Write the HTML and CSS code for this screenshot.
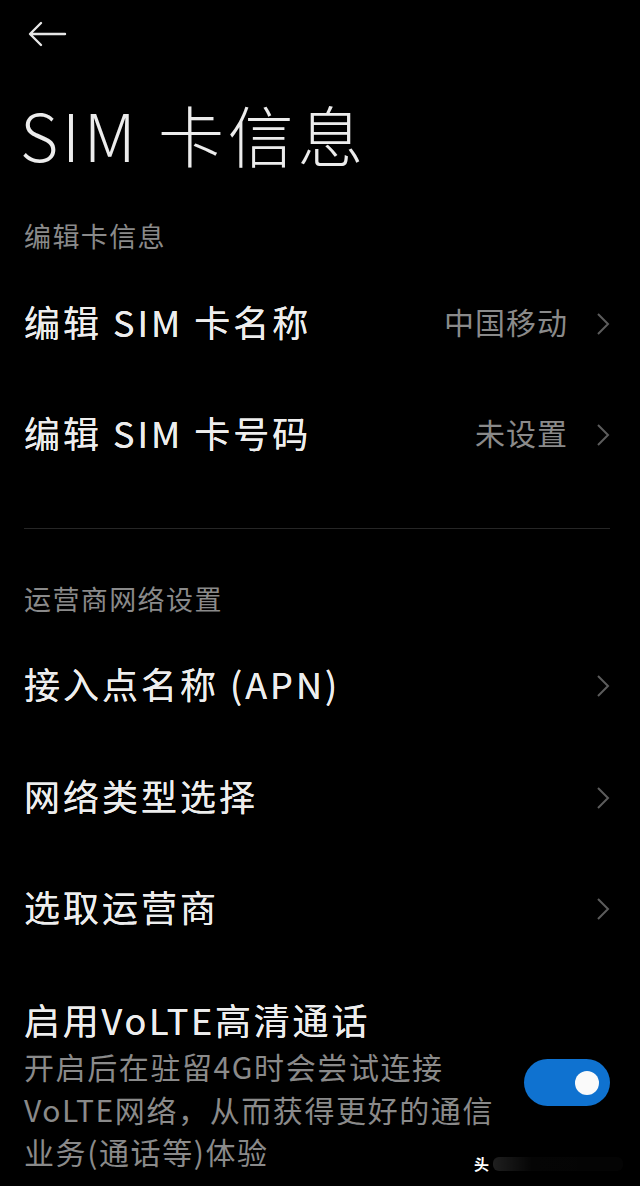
FILE: index.html
```html
<!DOCTYPE html>
<html lang="zh-CN">
<head>
<meta charset="utf-8">
<title>SIM 卡信息</title>
<link rel="stylesheet" href="styles.css">
</head>
<body>
<div class="screen">
  <header class="topbar">
    <svg class="back" width="40" height="26" viewBox="0 0 40 26" aria-hidden="true">
      <path d="M37 13H3M13 2L2 13l11 11" fill="none" stroke="#e6e6e6" stroke-width="2.4" stroke-linecap="round" stroke-linejoin="round"/>
    </svg>
  </header>

  <h1 class="page-title">SIM 卡信息</h1>

  <div class="section-label">编辑卡信息</div>
  <div class="row">
    <span class="row-title">编辑 SIM 卡名称</span>
    <span class="row-value">中国移动</span>
    <svg class="chev" width="14" height="24" viewBox="0 0 14 24"><path d="M2 2l10 10-10 10" fill="none" stroke="#5c5c5c" stroke-width="2"/></svg>
  </div>
  <div class="row">
    <span class="row-title">编辑 SIM 卡号码</span>
    <span class="row-value">未设置</span>
    <svg class="chev" width="14" height="24" viewBox="0 0 14 24"><path d="M2 2l10 10-10 10" fill="none" stroke="#5c5c5c" stroke-width="2"/></svg>
  </div>

  <div class="divider"></div>

  <div class="section-label second">运营商网络设置</div>
  <div class="row">
    <span class="row-title">接入点名称 (APN)</span>
    <svg class="chev" width="14" height="24" viewBox="0 0 14 24"><path d="M2 2l10 10-10 10" fill="none" stroke="#5c5c5c" stroke-width="2"/></svg>
  </div>
  <div class="row">
    <span class="row-title">网络类型选择</span>
    <svg class="chev" width="14" height="24" viewBox="0 0 14 24"><path d="M2 2l10 10-10 10" fill="none" stroke="#5c5c5c" stroke-width="2"/></svg>
  </div>
  <div class="row">
    <span class="row-title">选取运营商</span>
    <svg class="chev" width="14" height="24" viewBox="0 0 14 24"><path d="M2 2l10 10-10 10" fill="none" stroke="#5c5c5c" stroke-width="2"/></svg>
  </div>

  <div class="volte">
    <div class="volte-text">
      <div class="row-title volte-title">启用VoLTE高清通话</div>
      <div class="volte-desc">开启后在驻留4G时会尝试连接<br>VoLTE网络，从而获得更好的通信<br>业务(通话等)体验</div>
    </div>
    <div class="toggle"><span class="knob"></span></div>
  </div>

  <div class="watermark"><span class="wm-char">头</span><span class="wm-smear"></span></div>
</div>
</body>
</html>
```

FILE: styles.css
```css
html, body {
  margin: 0;
  padding: 0;
  background: #000;
}
body {
  font-family: "Noto Sans CJK SC", "Noto Sans", sans-serif;
  color: #e8e8e8;
}
.screen {
  width: 640px;
  height: 1186px;
  overflow: hidden;
  position: relative;
  background: #000;
}
.topbar {
  height: 68px;
  display: flex;
  align-items: center;
  padding-left: 28px;
}
.back { display: block; }
.page-title {
  margin: 0;
  height: 140px;
  line-height: 130px;
  padding-left: 20px;
  font-size: 66px;
  font-weight: 300;
  color: #ececec;
  letter-spacing: 3.8px;
}
.section-label {
  height: 56px;
  line-height: 56px;
  margin-bottom: 4px;
  padding-left: 24px;
  font-size: 27px;
  color: #8a8a8a;
  letter-spacing: 1.4px;
}
.section-label.second {
  margin-top: 42px;
}
.row {
  height: 111.3px;
  box-sizing: border-box;
  display: flex;
  align-items: center;
  padding: 0 30px 6px 24px;
}
.row .chev { margin-top: 6px; }
.row-title {
  flex: 1;
  font-size: 36px;
  font-weight: 400;
  color: #ededed;
  letter-spacing: 3px;
  white-space: nowrap;
  text-shadow: 0 0 0.4px #ededed;
}
.row-value {
  font-size: 30px;
  color: #8a8a8a;
  letter-spacing: 1px;
  margin-right: 28px;
}
.chev { display: block; flex: none; }
.divider {
  height: 1px;
  background: #262626;
  margin: 37px 30px 0 24px;
}
.volte {
  display: flex;
  align-items: flex-start;
  padding: 33px 30px 0 24px;
}
.volte-text { flex: 1; }
.volte-title {
  line-height: 44px;
  height: 44px;
  letter-spacing: 2.8px;
}
.volte-desc {
  margin-top: 4px;
  font-size: 30px;
  line-height: 42.5px;
  color: #8a8a8a;
  letter-spacing: 1.6px;
}
.toggle {
  flex: none;
  width: 86px;
  height: 47px;
  border-radius: 24px;
  background: #0f72d0;
  display: flex;
  align-items: center;
  justify-content: flex-end;
  padding-right: 11px;
  box-sizing: border-box;
  margin-top: 62px;
}
.knob {
  width: 24px;
  height: 24px;
  border-radius: 50%;
  background: #fafafa;
}
.watermark {
  position: absolute;
  left: 474px;
  top: 1153px;
  display: flex;
  align-items: center;
}
.wm-char {
  font-size: 15px;
  font-weight: 700;
  color: #fff;
}
.wm-smear {
  width: 130px;
  height: 14px;
  margin-left: 4px;
  background: linear-gradient(90deg, rgba(255,255,255,0.12), rgba(255,255,255,0.02) 30%, rgba(255,255,255,0.015));
  border-radius: 6px;
}
```
